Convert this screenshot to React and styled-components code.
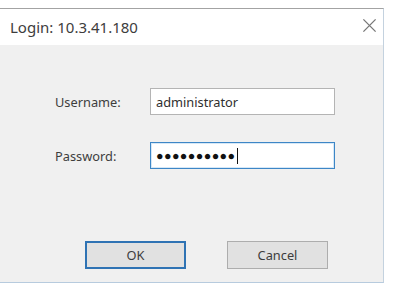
import React from 'react';
import styled, { createGlobalStyle } from 'styled-components';

const GlobalStyle = createGlobalStyle`
  body {
    margin: 0;
    background: #ffffff;
    font-family: "Noto Sans", "Liberation Sans", sans-serif;
  }
`

const Page = styled.div`
  padding-top: 8px;
  width: 393px;
  height: 289px;
  box-sizing: border-box;
`

const Window = styled.div`
  width: 384px;
  box-sizing: border-box;
  border-top: 1px solid #a3a3a3;
  border-right: 1px solid #c4d2df;
  border-bottom: 1px solid #b7cbde;
  background: #f0f0f0;
`

const TitleBar = styled.div`
  height: 36px;
  background: #ffffff;
  display: flex;
  align-items: center;
  justify-content: space-between;
  padding: 0 0 0 10px;
  color: #3d3d3d;
  font-size: 15px;
`

const CloseButton = styled.span`
  width: 28px;
  height: 28px;
  display: flex;
  align-items: center;
  justify-content: center;
  margin-top: -3px;
`

const Body = styled.div`
  height: 237px;
  box-sizing: border-box;
  padding: 43px 0 0 55px;
`

const Form = styled.div`
  display: grid;
  grid-template-columns: 95px 185px;
  grid-auto-rows: 27px;
  row-gap: 27px;
  align-items: center;
`

const Label = styled.label`
  font-size: 12.8px;
  color: #3d3d3d;
`

const Field = styled.div`
  height: 27px;
  box-sizing: border-box;
  background: #ffffff;
  border: 1px solid ${p => (p.$focused ? '#3d86c6' : '#b4b4b4')};
  ${p => p.$focused && 'box-shadow: inset 0 0 0 1px #d6e8f7;'}
  display: flex;
  align-items: center;
  padding-left: 5px;
  font-size: 12.8px;
  color: #2e2e2e;
`

const Dots = styled.span`
  font-size: 12.5px;
  letter-spacing: 0.4px;
  color: #111;
`

const Caret = styled.span`
  display: inline-block;
  width: 1.5px;
  height: 16px;
  background: #111;
  margin-left: 1px;
`

const Buttons = styled.div`
  display: flex;
  gap: 41px;
  margin: 72px 0 0 30px;
`

const Button = styled.button`
  width: 101px;
  height: 28px;
  box-sizing: border-box;
  background: #e1e1e1;
  border: ${p => (p.$primary ? '2px solid #2f73b4' : '1px solid #adadad')};
  font-family: inherit;
  font-size: 12.8px;
  color: #3d3d3d;
  padding: 0;
`

function App() {
  return (
    <Page>
      <GlobalStyle />
      <Window>
        <TitleBar>
          <span>Login: 10.3.41.180</span>
          <CloseButton>
            <svg width="15" height="15" viewBox="0 0 16 16">
              <path d="M1.5 1.5 L14.5 14.5 M14.5 1.5 L1.5 14.5" stroke="#777" strokeWidth="1.4" />
            </svg>
          </CloseButton>
        </TitleBar>
        <Body>
          <Form>
            <Label>Username:</Label>
            <Field>administrator</Field>
            <Label>Password:</Label>
            <Field $focused>
              <Dots>●●●●●●●●●●</Dots>
              <Caret />
            </Field>
          </Form>
          <Buttons>
            <Button $primary>OK</Button>
            <Button>Cancel</Button>
          </Buttons>
        </Body>
      </Window>
    </Page>
  )
}

export default App;
